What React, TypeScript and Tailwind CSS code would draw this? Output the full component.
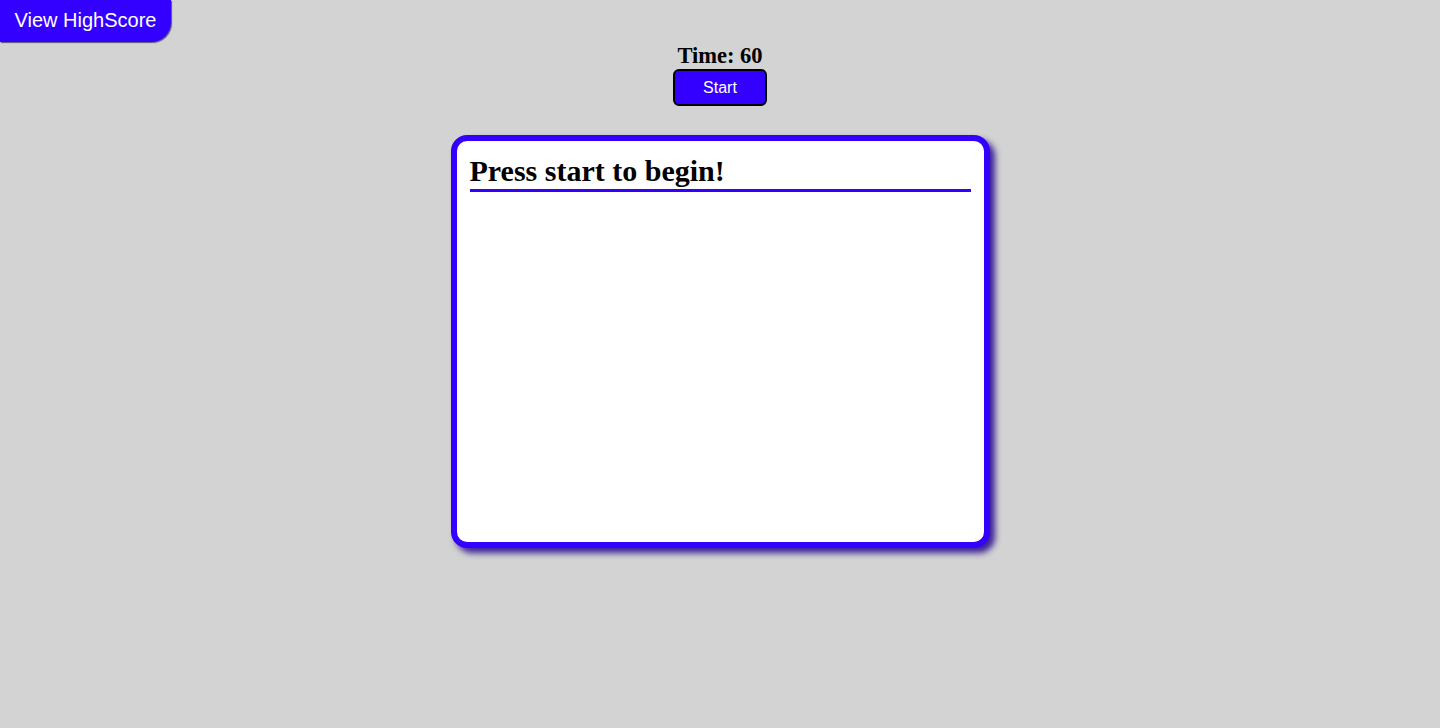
export default function App() {
  return (
    <div className="relative min-h-[728px] w-full bg-[#d3d3d3]">
      <button
        type="button"
        className="absolute left-0 top-0 h-[42px] w-[171px] rounded-br-[20px] bg-[#3300ff] pb-[2px] font-['Liberation_Sans',Arial,sans-serif] text-[20px] text-white shadow-[1px_1px_1px_rgba(0,0,60,0.6)]"
      >
        View HighScore
      </button>

      <div className="flex flex-col items-center pt-[43px]">
        <h3 className="font-['Liberation_Serif','Times_New_Roman',serif] text-[22.5px] font-bold leading-[26px] text-black">
          Time: 60
        </h3>
        <button
          type="button"
          className="h-[37px] w-[94px] rounded-[6px] border-2 border-black bg-[#3300ff] font-['Liberation_Sans',Arial,sans-serif] text-[16px] text-white"
        >
          Start
        </button>

        <div className="mt-[29px] h-[413px] w-[539px] rounded-[16px] border-[6px] border-[#3300ff] bg-white px-[13px] pt-[12px] shadow-[5px_5px_6px_rgba(30,0,140,0.85)]">
          <h1 className="border-b-[3px] border-[#3300ff] font-['Liberation_Serif','Times_New_Roman',serif] text-[30px] font-bold leading-[36px] text-black">
            Press start to begin!
          </h1>
        </div>
      </div>
    </div>
  );
}
